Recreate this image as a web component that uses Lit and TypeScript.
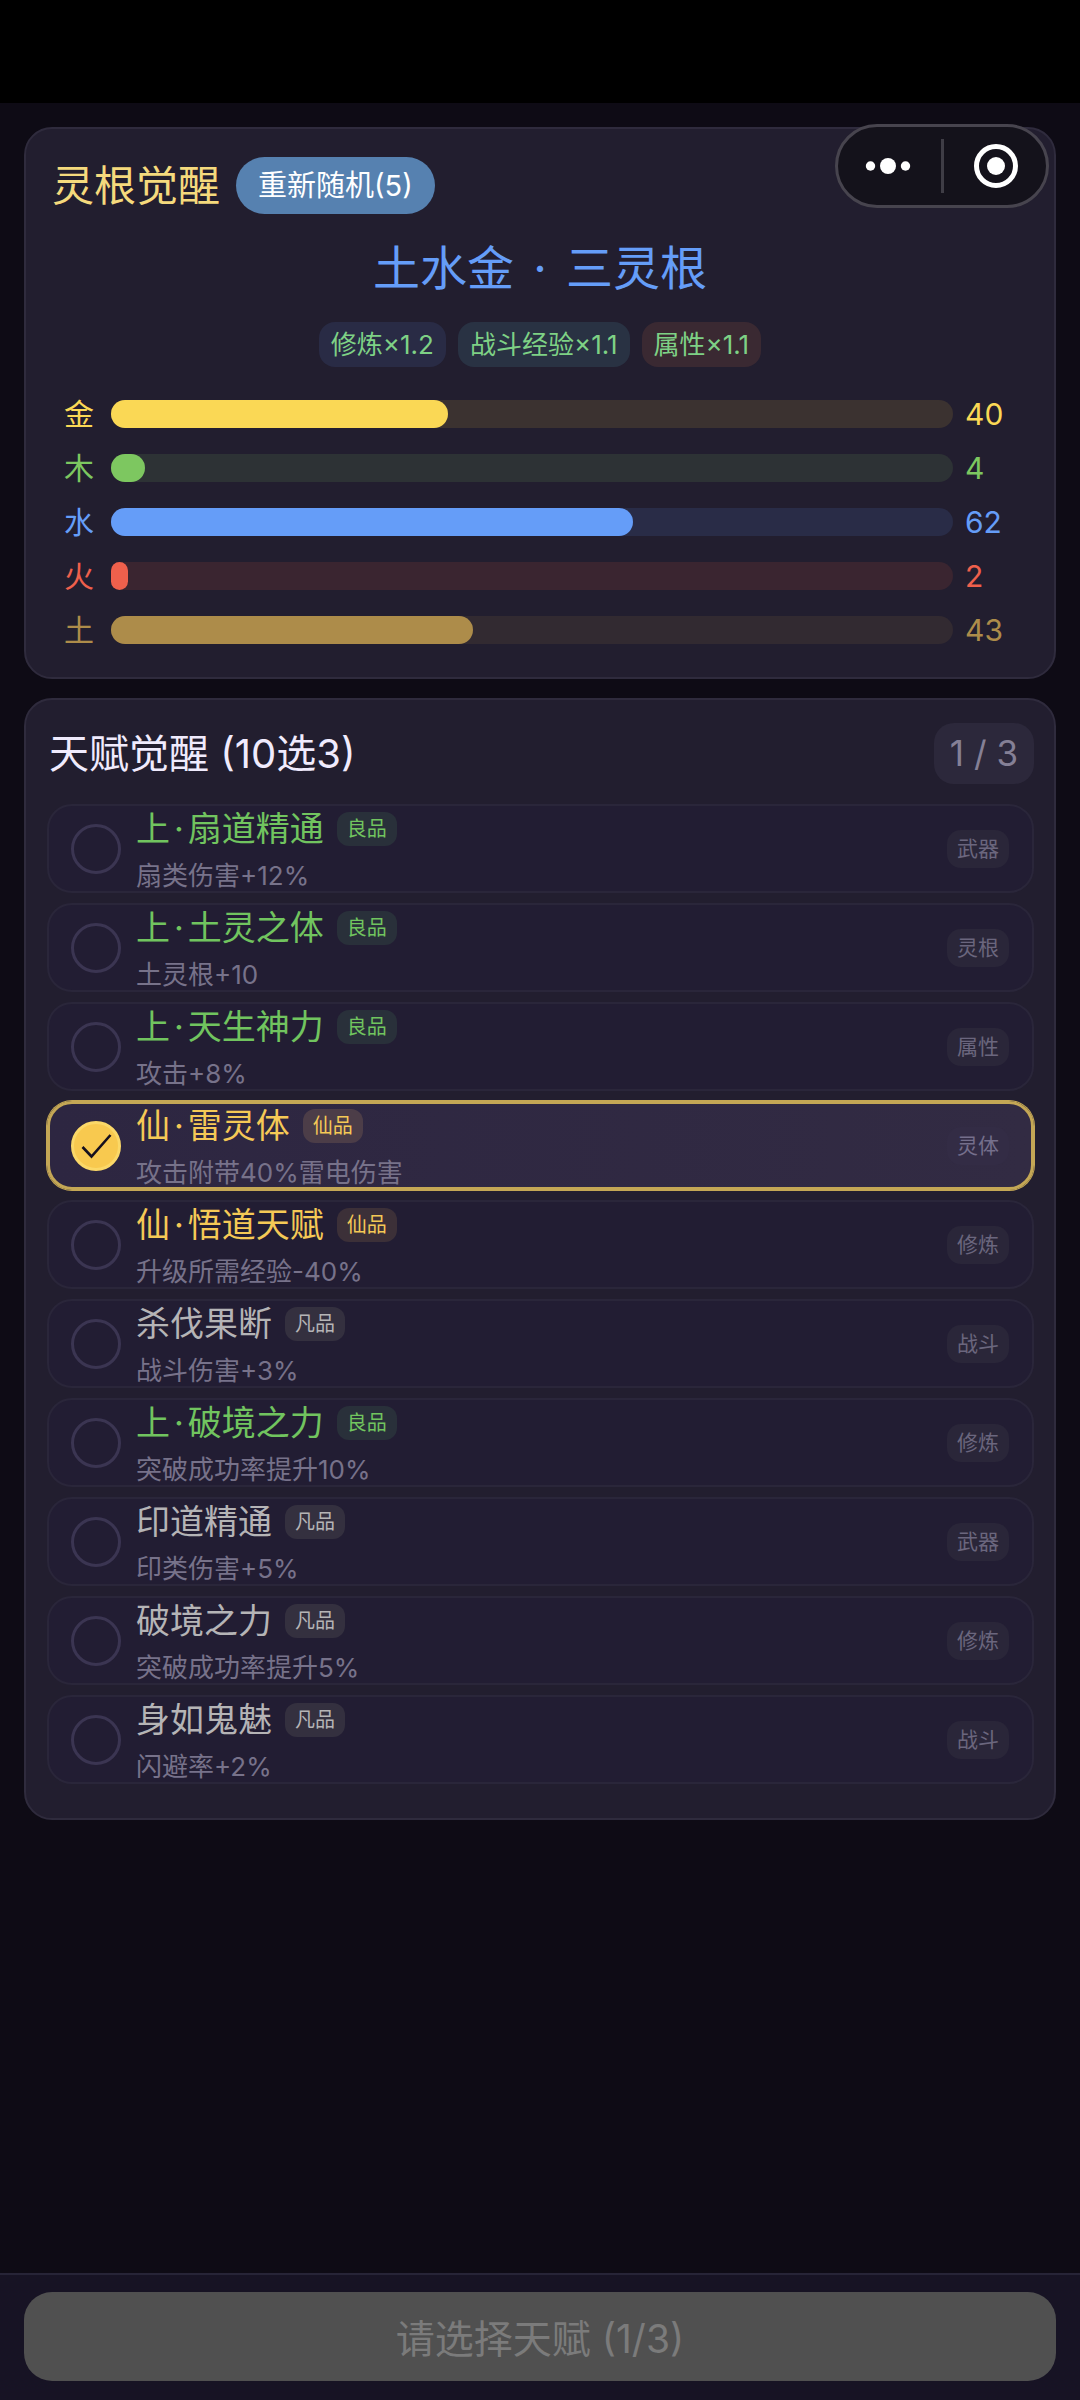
import { LitElement, html, css } from "lit";
import { customElement, property, state } from "lit/decorators.js";
import { classMap } from "lit/directives/class-map.js";
import { styleMap } from "lit/directives/style-map.js";

type Grade = "good" | "immortal" | "common";

interface Root {
  name: string;
  value: number;
  tone: string;
}

interface Talent {
  prefix?: string;
  name: string;
  desc: string;
  grade: Grade;
  kind: string;
}

const ROOTS: Root[] = [
  { name: "金", value: 40, tone: "metal" },
  { name: "木", value: 4, tone: "wood" },
  { name: "水", value: 62, tone: "water" },
  { name: "火", value: 2, tone: "fire" },
  { name: "土", value: 43, tone: "earth" },
];

const GRADE_LABEL: Record<Grade, string> = {
  good: "良品",
  immortal: "仙品",
  common: "凡品",
};

const TALENTS: Talent[] = [
  { prefix: "上", name: "扇道精通", desc: "扇类伤害+12%", grade: "good", kind: "武器" },
  { prefix: "上", name: "土灵之体", desc: "土灵根+10", grade: "good", kind: "灵根" },
  { prefix: "上", name: "天生神力", desc: "攻击+8%", grade: "good", kind: "属性" },
  { prefix: "仙", name: "雷灵体", desc: "攻击附带40%雷电伤害", grade: "immortal", kind: "灵体" },
  { prefix: "仙", name: "悟道天赋", desc: "升级所需经验-40%", grade: "immortal", kind: "修炼" },
  { name: "杀伐果断", desc: "战斗伤害+3%", grade: "common", kind: "战斗" },
  { prefix: "上", name: "破境之力", desc: "突破成功率提升10%", grade: "good", kind: "修炼" },
  { name: "印道精通", desc: "印类伤害+5%", grade: "common", kind: "武器" },
  { name: "破境之力", desc: "突破成功率提升5%", grade: "common", kind: "修炼" },
  { name: "身如鬼魅", desc: "闪避率+2%", grade: "common", kind: "战斗" },
];

const MAX_PICKS = 3;

/** One element row: name, proportional bar and value. */
@customElement("root-bar")
export class RootBar extends LitElement {
  @property() name = "";
  @property() tone = "";
  @property({ type: Number }) value = 0;

  static styles = css`
    :host {
      display: block;
    }
    .row {
      display: flex;
      align-items: center;
      font-size: 30px;
      line-height: 46px;
      color: var(--tone);
    }
    .metal { --tone: #fad855; --track: #3b3230; }
    .wood { --tone: #7dc760; --track: #2d3235; }
    .water { --tone: #659df8; --track: #292c47; }
    .fire { --tone: #ef604c; --track: #3a2530; }
    .earth { --tone: #ad8c4a; --track: #322a31; }
    .name {
      width: 47px;
    }
    .track {
      flex: 1;
      height: 28px;
      border-radius: 14px;
      background: var(--track);
    }
    .fill {
      height: 100%;
      border-radius: 14px;
      background: var(--tone);
    }
    .value {
      width: 52px;
      padding-left: 12px;
    }
  `;

  render() {
    return html`<div class="row ${this.tone}">
      <span class="name">${this.name}</span>
      <div class="track" role="meter" aria-label=${this.name} aria-valuemin="0" aria-valuemax="100" aria-valuenow=${this.value}>
        <div class="fill" style=${styleMap({ width: `${this.value}%` })}></div>
      </div>
      <span class="value">${this.value}</span>
    </div>`;
  }
}

/** A selectable talent. */
@customElement("talent-row")
export class TalentRow extends LitElement {
  @property({ attribute: false }) talent!: Talent;
  @property({ type: Boolean }) checked = false;

  static styles = css`
    :host {
      display: block;
    }
    * {
      box-sizing: border-box;
    }
    .row {
      display: flex;
      align-items: center;
      height: 89px;
      padding: 0 23px 0 22px;
      border: 2px solid #2a263a;
      border-radius: 25px;
      background: #221d33;
      cursor: pointer;
    }
    .row.checked {
      padding: 0 22px 0 21px;
      border: 3px solid #c4a755;
      box-shadow: 0 0 0 1px #c4a755;
      background: linear-gradient(90deg, #2d2641, #322b43);
    }
    .pick {
      display: grid;
      flex: none;
      width: 50px;
      height: 50px;
      margin-right: 15px;
    }
    .box,
    .tick {
      grid-area: 1 / 1;
      width: 50px;
      height: 50px;
      margin: 0;
    }
    .box {
      appearance: none;
      border: 3px solid #3b3552;
      border-radius: 50%;
      cursor: pointer;
    }
    .box:checked {
      border-color: #fbd868;
      background: #f8c94f;
    }
    .tick {
      pointer-events: none;
    }
    .info {
      display: flex;
      flex: 1;
      flex-direction: column;
      gap: 12px;
      min-width: 0;
    }
    .head {
      display: flex;
      align-items: center;
      gap: 13px;
    }
    .name {
      font-size: 34px;
      line-height: 42px;
    }
    .dot {
      margin: 0 4px;
    }
    .grade {
      padding: 0 10px;
      border-radius: 12px;
      font-size: 20px;
      line-height: 34px;
    }
    .good { color: #71c45f; }
    .immortal { color: #f5c956; }
    .common { color: #b5b4b6; }
    .grade.good { background: #29303a; }
    .grade.immortal { background: #3c3038; }
    .grade.common { background: #34303f; }
    .checked .grade.immortal { background: #4c3d48; }
    .desc {
      font-size: 26px;
      line-height: 28px;
      color: #77728a;
    }
    .kind {
      padding: 0 10px;
      border-radius: 14px;
      background: #2a2639;
      font-size: 21px;
      line-height: 38px;
      color: #6b667e;
    }
    .checked .kind {
      background: #332c45;
      color: #756f8c;
    }
  `;

  private toggle() {
    this.dispatchEvent(new CustomEvent("pick", { bubbles: true, composed: true }));
  }

  render() {
    const t = this.talent;
    return html`<label class=${classMap({ row: true, checked: this.checked })}>
      <span class="pick">
        <input class="box" type="checkbox" .checked=${this.checked} @change=${this.toggle} />
        ${this.checked
          ? html`<svg class="tick" viewBox="0 0 50 50" aria-hidden="true">
              <path d="M11.500 26 L20.500 35.500 L39.500 14" fill="none" stroke="#15101f" stroke-width="2.600" />
            </svg>`
          : ""}
      </span>
      <span class="info">
        <span class="head">
          <span class="name ${t.grade}">${t.prefix ? html`${t.prefix}<span class="dot">·</span>` : ""}${t.name}</span>
          <span class="grade ${t.grade}">${GRADE_LABEL[t.grade]}</span>
        </span>
        <span class="desc">${t.desc}</span>
      </span>
      <span class="kind">${t.kind}</span>
    </label>`;
  }
}

@customElement("app-root")
export class AppRoot extends LitElement {
  @state() private picked = new Set<number>([3]);

  static styles = css`
    :host {
      display: block;
      font-family: Inter, "Noto Sans CJK SC", sans-serif;
      font-weight: 400;
    }
    * {
      box-sizing: border-box;
    }
    h1,
    h2,
    p,
    ul {
      margin: 0;
      padding: 0;
      font-weight: 400;
    }
    button {
      border: 0;
      font: inherit;
      cursor: pointer;
    }
    .page {
      position: relative;
      display: flex;
      flex-direction: column;
      min-height: 100vh;
      background: #0e0b15;
    }
    .status {
      height: 103px;
      background: #000;
    }
    .capsule {
      position: absolute;
      top: 124px;
      right: 31px;
      display: grid;
      grid-template-columns: 1fr 3px 1fr;
      align-items: center;
      width: 214px;
      height: 84px;
      border: 3px solid #47444e;
      border-radius: 42px;
      background: #14121b;
    }
    .capsule-button {
      display: grid;
      height: 100%;
      padding: 0 3px 0 0;
      place-items: center;
      background: none;
    }
    .capsule-button:last-child {
      padding: 0 0 0 3px;
    }
    .divider {
      height: 54px;
      background: #3f3d46;
    }
    .main {
      display: flex;
      flex: 1;
      flex-direction: column;
      gap: 19px;
      padding: 24px;
    }
    .card {
      display: flex;
      flex-direction: column;
      border: 2px solid #2f2b3d;
      border-radius: 28px;
      background: #221e2f;
    }
    .roots {
      gap: 24px;
      padding: 28px 26px 24px;
    }
    .roots-head {
      display: flex;
      align-items: center;
      gap: 16px;
    }
    .title {
      font-size: 42px;
      line-height: 56px;
      color: #f5da7d;
    }
    .reroll {
      padding: 0 22px;
      border-radius: 29px;
      background: #5681b0;
      font-size: 29px;
      line-height: 57px;
      color: #fff;
    }
    .result {
      font-size: 47px;
      line-height: 60px;
      text-align: center;
      color: #659df8;
    }
    .dot {
      margin: 0 6px;
    }
    .bonuses {
      display: flex;
      justify-content: center;
      gap: 12px;
    }
    .bonus {
      padding: 0 12px;
      border-radius: 16px;
      font-size: 26px;
      line-height: 45px;
      color: #7ed185;
    }
    .study { background: #292b45; }
    .battle { background: #293243; }
    .stat { background: #3a2932; }
    .bars {
      display: flex;
      flex-direction: column;
      gap: 8px;
      padding: 0 11px 0 12px;
    }
    .talents {
      gap: 20px;
      padding: 23px 20px 34px 21px;
    }
    .talents-head {
      display: flex;
      align-items: center;
      justify-content: space-between;
      padding-left: 2px;
    }
    .subtitle {
      font-size: 40px;
      line-height: 60px;
      color: #f0ebfd;
    }
    .count {
      padding: 0 16px;
      border-radius: 20px;
      background: #2c283b;
      font-size: 35px;
      line-height: 61px;
      color: #858096;
    }
    .list {
      display: flex;
      flex-direction: column;
      gap: 10px;
      list-style: none;
    }
    .footer {
      padding: 17px 24px 19px;
      border-top: 2px solid #272437;
      background: #171324;
    }
    .confirm {
      width: 100%;
      height: 89px;
      padding: 0 0 2px;
      border-radius: 28px;
      background: #505050;
      font-size: 39px;
      color: #7b7b7b;
    }
  `;

  private toggle(index: number) {
    const next = new Set(this.picked);
    if (next.has(index)) {
      next.delete(index);
    } else if (next.size < MAX_PICKS) {
      next.add(index);
    }
    this.picked = next;
  }

  render() {
    const n = this.picked.size;
    return html`<div class="page">
      <div class="status"></div>
      <main class="main">
        <section class="card roots">
          <div class="roots-head">
            <h1 class="title">灵根觉醒</h1>
            <button class="reroll" type="button">重新随机(5)</button>
          </div>
          <p class="result">土水金 <span class="dot">·</span> 三灵根</p>
          <div class="bonuses">
            <span class="bonus study">修炼×1.2</span>
            <span class="bonus battle">战斗经验×1.1</span>
            <span class="bonus stat">属性×1.1</span>
          </div>
          <div class="bars">
            ${ROOTS.map((r) => html`<root-bar .name=${r.name} .tone=${r.tone} .value=${r.value}></root-bar>`)}
          </div>
        </section>
        <section class="card talents">
          <div class="talents-head">
            <h2 class="subtitle">天赋觉醒 (10选3)</h2>
            <span class="count">${n} / ${MAX_PICKS}</span>
          </div>
          <ul class="list">
            ${TALENTS.map(
              (t, i) => html`<li>
                <talent-row .talent=${t} .checked=${this.picked.has(i)} @pick=${() => this.toggle(i)}></talent-row>
              </li>`
            )}
          </ul>
        </section>
      </main>
      <footer class="footer">
        <button class="confirm" type="button" ?disabled=${n < MAX_PICKS}>请选择天赋 (${n}/${MAX_PICKS})</button>
      </footer>
      <div class="capsule">
        <button class="capsule-button" type="button" aria-label="更多">
          <svg width="48" height="48" viewBox="0 0 48 48" fill="#fff">
            <circle cx="6.500" cy="24" r="4.700" />
            <circle cx="24" cy="24" r="8" />
            <circle cx="41.500" cy="24" r="4.700" />
          </svg>
        </button>
        <span class="divider"></span>
        <button class="capsule-button" type="button" aria-label="关闭">
          <svg width="48" height="48" viewBox="0 0 48 48">
            <circle cx="24" cy="24" r="19.500" fill="none" stroke="#fff" stroke-width="5" />
            <circle cx="24" cy="24" r="9" fill="#fff" />
          </svg>
        </button>
      </div>
    </div>`;
  }
}
